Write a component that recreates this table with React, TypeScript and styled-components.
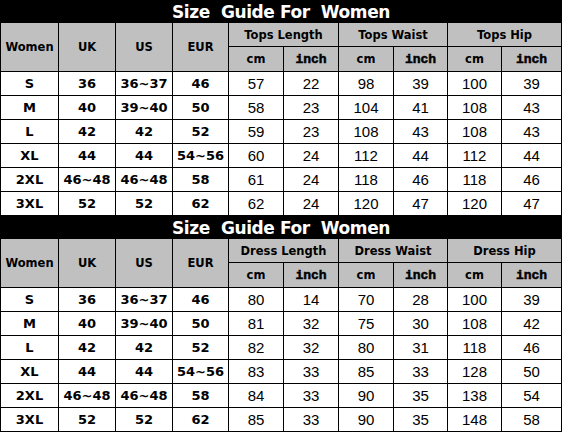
import React from "react";
import styled, { createGlobalStyle } from "styled-components";

const Global = createGlobalStyle`
  html, body { margin: 0; padding: 0; background: #fff; }
`;

const Page = styled.div`
  width: 562px;
  display: flex;
  flex-direction: column;
`;

const Title = styled.div`
  height: 23px;
  background: #000;
  color: #fff;
  font-family: "DejaVu Sans", sans-serif;
  font-weight: bold;
  font-size: 17px;
  line-height: 24px;
  text-align: center;
  white-space: pre;
  letter-spacing: -0.4px;
`;

const Grid = styled.div`
  display: grid;
  grid-template-columns: 57px 56px 56px 55px 54px 54px 54px 53px 53px 59px;
  grid-template-rows: 23px 24px repeat(6, 23px);
  gap: 1px;
  padding: 0 1px 1px 1px;
  background: #000;
`;

const Cell = styled.div<{ $head?: boolean; $cs?: number; $rs?: number }>`
  background: ${(p) => (p.$head ? "#c0c0c0" : "#fff")};
  display: flex;
  align-items: center;
  justify-content: center;
  color: #000;
  ${(p) => (p.$cs ? `grid-column: span ${p.$cs};` : "")}
  ${(p) => (p.$rs ? `grid-row: span ${p.$rs};` : "")}
`;

const HeadText = styled.span`
  font-family: "DejaVu Sans", sans-serif;
  font-weight: bold;
  font-size: 11.5px;
`;

const InchText = styled.span`
  font-family: "Liberation Mono", monospace;
  font-weight: bold;
  font-size: 13px;
  -webkit-text-stroke: 0.5px #000;
`;

const SizeText = styled.span`
  font-family: "DejaVu Sans", sans-serif;
  font-weight: bold;
  font-size: 13px;
`;

const NumText = styled.span`
  font-family: "Liberation Sans", sans-serif;
  font-weight: normal;
  font-size: 15px;
  color: #000;
`;

const sizes: [string, string, string, string][] = [
  ["S", "36", "36~37", "46"],
  ["M", "40", "39~40", "50"],
  ["L", "42", "42", "52"],
  ["XL", "44", "44", "54~56"],
  ["2XL", "46~48", "46~48", "58"],
  ["3XL", "52", "52", "62"],
];

const topsData = [
  [57, 22, 98, 39, 100, 39],
  [58, 23, 104, 41, 108, 43],
  [59, 23, 108, 43, 108, 43],
  [60, 24, 112, 44, 112, 44],
  [61, 24, 118, 46, 118, 46],
  [62, 24, 120, 47, 120, 47],
];

const dressData = [
  [80, 14, 70, 28, 100, 39],
  [81, 32, 75, 30, 108, 42],
  [82, 32, 80, 31, 118, 46],
  [83, 33, 85, 33, 128, 50],
  [84, 33, 90, 35, 138, 54],
  [85, 33, 90, 35, 148, 58],
];

const SizeTable: React.FC<{ groups: string[]; data: number[][] }> = ({ groups, data }) => (
  <>
    <Title>{"Size  Guide For  Women"}</Title>
    <Grid>
      <Cell $head $rs={2}><HeadText>Women</HeadText></Cell>
      <Cell $head $rs={2}><HeadText>UK</HeadText></Cell>
      <Cell $head $rs={2}><HeadText>US</HeadText></Cell>
      <Cell $head $rs={2}><HeadText>EUR</HeadText></Cell>
      {groups.map((g) => (
        <Cell key={g} $head $cs={2}><HeadText>{g}</HeadText></Cell>
      ))}
      {groups.map((g) => (
        <React.Fragment key={g + "u"}>
          <Cell $head><HeadText>cm</HeadText></Cell>
          <Cell $head><InchText>inch</InchText></Cell>
        </React.Fragment>
      ))}
      {sizes.map((s, i) => (
        <React.Fragment key={s[0]}>
          {s.map((v, j) => (
            <Cell key={"s" + j}><SizeText>{v}</SizeText></Cell>
          ))}
          {data[i].map((v, j) => (
            <Cell key={"n" + j}><NumText>{v}</NumText></Cell>
          ))}
        </React.Fragment>
      ))}
    </Grid>
  </>
);

export default function App() {
  return (
    <Page>
      <Global />
      <SizeTable groups={["Tops Length", "Tops Waist", "Tops Hip"]} data={topsData} />
      <SizeTable groups={["Dress Length", "Dress Waist", "Dress Hip"]} data={dressData} />
    </Page>
  );
}
